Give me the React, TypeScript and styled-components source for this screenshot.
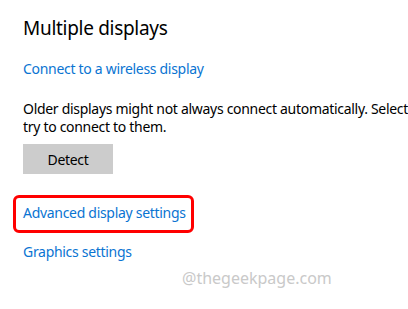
import * as React from "react";
import styled, { createGlobalStyle } from "styled-components";

const GlobalStyle = createGlobalStyle`
  html, body {
    margin: 0;
    padding: 0;
    background: #ffffff;
    overflow: hidden;
  }
  body {
    font-family: "Noto Sans", "Open Sans", Arial, sans-serif;
    -webkit-font-smoothing: antialiased;
  }
`;

const Page = styled.div`
  position: relative;
  width: 408px;
  height: 309px;
  overflow: hidden;
`;

const Content = styled.div`
  display: flex;
  flex-direction: column;
  align-items: flex-start;
  padding: 14px 0 0 23px;
  width: 560px;
`;

const Title = styled.h2`
  margin: 0;
  font-size: 19px;
  line-height: 28px;
  font-weight: 400;
  letter-spacing: -0.3px;
  color: #000000;
`;

const Link = styled.a<{ $gap?: number }>`
  display: block;
  margin-top: ${(p) => p.$gap ?? 0}px;
  font-size: 14px;
  line-height: 20px;
  letter-spacing: -0.3px;
  color: #0a74d2;
  text-decoration: none;
  white-space: nowrap;
  cursor: pointer;
`;

const Description = styled.p`
  margin: 21px 0 0;
  font-size: 14px;
  line-height: 18px;
  letter-spacing: -0.3px;
  color: #000000;
  white-space: nowrap;
`;

const DetectButton = styled.button`
  margin-top: 8px;
  width: 90px;
  height: 30px;
  border: none;
  background: #cccccc;
  color: #000000;
  font-family: inherit;
  font-size: 14px;
  letter-spacing: -0.3px;
  padding: 0;
`;

const Highlight = styled.div`
  box-sizing: border-box;
  margin: 21px 0 0 -10px;
  width: 181px;
  padding: 5px 0 7px 7px;
  border: 3px solid #ff0000;
  border-radius: 6px;
`;

const Watermark = styled.span`
  position: absolute;
  left: 182px;
  top: 267px;
  font-size: 16px;
  line-height: 22px;
  color: #c9c9c9;
`;

export default function App() {
  return (
    <Page>
      <GlobalStyle />
      <Content>
        <Title>Multiple displays</Title>
        <Link $gap={17}>Connect to a wireless display</Link>
        <Description>
          Older displays might not always connect automatically. Select Detect to
          <br />
          try to connect to them.
        </Description>
        <DetectButton>Detect</DetectButton>
        <Highlight>
          <Link>Advanced display settings</Link>
        </Highlight>
        <Link $gap={9}>Graphics settings</Link>
      </Content>
      <Watermark>@thegeekpage.com</Watermark>
    </Page>
  );
}
